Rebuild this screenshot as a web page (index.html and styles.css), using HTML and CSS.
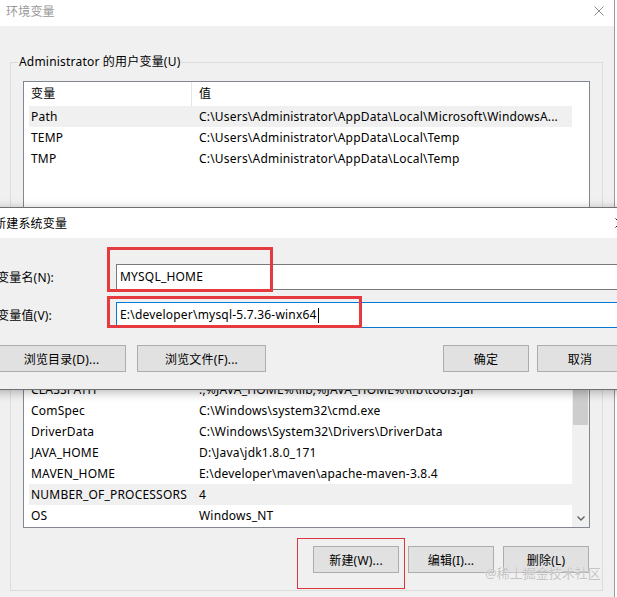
FILE: index.html
```html
<!DOCTYPE html>
<html lang="zh-CN">
<head>
    <meta charset="UTF-8">
    <meta name="viewport" content="width=device-width, initial-scale=1.0">
    <title>环境变量</title>
    <link rel="stylesheet" href="styles.css">
</head>
<body>
    <div class="window">
        <div class="titlebar">
            <span class="title">环境变量</span>
            <svg class="close" width="10" height="10" viewBox="0 0 10 10">
                <path d="M0.5 0.5 L9.5 9.5 M9.5 0.5 L0.5 9.5" stroke="#8c8c8c" stroke-width="1" fill="none"/>
            </svg>
        </div>
        <div class="content">
            <fieldset class="group group-user">
                <legend>Administrator 的用户变量(U)</legend>
                <div class="list list-user">
                    <div class="rows">
                        <div class="row head"><span class="cell name">变量</span><span class="cell value">值</span></div>
                        <div class="row hover"><span class="cell name">Path</span><span class="cell value">C:\Users\Administrator\AppData\Local\Microsoft\WindowsA...</span></div>
                        <div class="row"><span class="cell name">TEMP</span><span class="cell value">C:\Users\Administrator\AppData\Local\Temp</span></div>
                        <div class="row"><span class="cell name">TMP</span><span class="cell value">C:\Users\Administrator\AppData\Local\Temp</span></div>
                    </div>
                </div>
                <div class="actions">
                    <button>新建(N)...</button>
                    <button>编辑(E)...</button>
                    <button>删除(D)</button>
                </div>
            </fieldset>

            <fieldset class="group group-system">
                <legend>系统变量(S)</legend>
                <div class="list list-system">
                    <div class="rows">
                        <div class="row"><span class="cell name">CLASSPATH</span><span class="cell value">.;%JAVA_HOME%\lib;%JAVA_HOME%\lib\tools.jar</span></div>
                        <div class="row"><span class="cell name">ComSpec</span><span class="cell value">C:\Windows\system32\cmd.exe</span></div>
                        <div class="row"><span class="cell name">DriverData</span><span class="cell value">C:\Windows\System32\Drivers\DriverData</span></div>
                        <div class="row"><span class="cell name">JAVA_HOME</span><span class="cell value">D:\Java\jdk1.8.0_171</span></div>
                        <div class="row"><span class="cell name">MAVEN_HOME</span><span class="cell value">E:\developer\maven\apache-maven-3.8.4</span></div>
                        <div class="row hover"><span class="cell name">NUMBER_OF_PROCESSORS</span><span class="cell value">4</span></div>
                        <div class="row"><span class="cell name">OS</span><span class="cell value">Windows_NT</span></div>
                    </div>
                    <div class="scrollbar">
                        <div class="arrow"></div>
                        <div class="thumb"></div>
                        <div class="track"></div>
                        <div class="arrow">
                            <svg width="8" height="5" viewBox="0 0 8 5">
                                <path d="M0.5 0.5 L4 4 L7.5 0.5" stroke="#606060" stroke-width="1.3" fill="none"/>
                            </svg>
                        </div>
                    </div>
                </div>
                <div class="actions">
                    <button>新建(W)...</button>
                    <button>编辑(I)...</button>
                    <button>删除(L)</button>
                </div>
            </fieldset>
        </div>
    </div>

    <!-- 新建系统变量 对话框 -->
    <div class="dialog">
        <div class="dialog-title">
            <span>新建系统变量</span>
            <svg class="close" width="10" height="10" viewBox="0 0 10 10">
                <path d="M0.5 0.5 L9.5 9.5 M9.5 0.5 L0.5 9.5" stroke="#222" stroke-width="1" fill="none"/>
            </svg>
        </div>
        <div class="dialog-body">
            <div class="field">
                <label>变量名(N):</label>
                <div class="input">MYSQL_HOME</div>
            </div>
            <div class="field">
                <label>变量值(V):</label>
                <div class="input focused">E:\developer\mysql-5.7.36-winx64<span class="caret"></span></div>
            </div>
            <div class="dialog-actions">
                <button class="wide">浏览目录(D)...</button>
                <button class="wide">浏览文件(F)...</button>
                <span class="spacer"></span>
                <button>确定</button>
                <button>取消</button>
            </div>
        </div>
    </div>

    <div class="mark mark-name"></div>
    <div class="mark mark-value"></div>
    <div class="mark mark-new"></div>
    <div class="watermark">@稀土掘金技术社区</div>
</body>
</html>
```

FILE: styles.css
```css
body {
    margin: 0;
    width: 617px;
    height: 597px;
    overflow: hidden;
    position: relative;
    background: #fff;
    font-family: "Noto Sans", "Noto Sans CJK SC", sans-serif;
    font-size: 12px;
    letter-spacing: 0.2px;
    color: #000;
}

.window {
    width: 614px;
    height: 597px;
    border-right: 1px solid #9a9a9a;
    background: #f0f0f0;
}

.titlebar {
    height: 26px;
    background: #fff;
    display: flex;
    align-items: center;
    justify-content: space-between;
    padding: 0 10px 4px 6px;
    box-sizing: border-box;
}

.titlebar .title {
    color: #999;
    font-size: 12px;
}

.content {
    padding: 28px 11px 0 10px;
}

.group {
    margin: 0;
    padding: 11px 12px 17px 12px;
    border: 1px solid #dcdcdc;
    min-inline-size: 0;
}

.group legend {
    margin-left: -5px;
    padding: 0 1px;
    line-height: 16px;
}

.group-system {
    margin-top: 8px;
}

.list {
    background: #fff;
    border: 1px solid #828790;
    box-sizing: border-box;
    display: flex;
    overflow: hidden;
}

.list-user {
    height: 150px;
    padding-right: 17px;
}

.list-system {
    height: 199px;
}

.rows {
    flex: 1;
    display: flex;
    flex-direction: column;
    padding-left: 5px;
    min-width: 0;
}

.list-system .rows {
    justify-content: flex-end;
    padding-bottom: 1px;
}

.row {
    display: grid;
    grid-template-columns: 163px 1fr;
    height: 21px;
    line-height: 21px;
    white-space: nowrap;
    flex-shrink: 0;
}

.row.head {
    height: 24px;
    line-height: 24px;
}

.row.head .name {
    border-right: 1px solid #e5e5e5;
}

.row.hover {
    background: #f0f0f0;
}

.cell {
    overflow: hidden;
}

.cell.name {
    padding-left: 2px;
}

.cell.value {
    padding-left: 7px;
}

.scrollbar {
    width: 17px;
    background: #f0f0f0;
    display: flex;
    flex-direction: column;
}

.scrollbar .arrow {
    height: 17px;
    display: flex;
    align-items: center;
    justify-content: center;
}

.scrollbar .thumb {
    flex: 1;
    margin: 0 1px;
    background: #cdcdcd;
}

.scrollbar .track {
    height: 85px;
}

.actions {
    display: flex;
    justify-content: flex-end;
    gap: 9px;
    margin-top: 18px;
    padding-right: 1px;
}

button {
    font-family: inherit;
    font-size: 12px;
    letter-spacing: inherit;
    color: #000;
    background: #e1e1e1;
    border: 1px solid #adadad;
    height: 27px;
    width: 86px;
    padding: 0;
    margin: 0;
}

/* dialog */

.dialog {
    position: absolute;
    top: 207px;
    left: -14px;
    width: 649px;
    height: 183px;
    box-sizing: border-box;
    border: 1px solid #707070;
    background: #f0f0f0;
    box-shadow: 0 2px 10px rgba(0, 0, 0, 0.3);
}

.dialog-title {
    height: 30px;
    background: #fff;
    display: flex;
    align-items: center;
    justify-content: space-between;
    padding: 0 9px 0 7px;
    font-size: 12px;
}

.dialog-body {
    padding: 26px 11px 16px 10px;
}

.field {
    display: flex;
    align-items: center;
    height: 26px;
}

.field + .field {
    margin-top: 12px;
}

.field label {
    width: 119px;
    flex-shrink: 0;
}

.input {
    flex: 1;
    height: 26px;
    box-sizing: border-box;
    border: 1px solid #7a7a7a;
    background: #fff;
    line-height: 24px;
    padding-left: 3px;
    white-space: nowrap;
    display: flex;
    align-items: center;
}

.input.focused {
    border-color: #0078d7;
}

.caret {
    display: inline-block;
    width: 0;
    height: 15px;
    border-left: 1px solid #000;
    margin-left: 1px;
}

.dialog-actions {
    display: flex;
    margin-top: 17px;
    gap: 8px;
}

.dialog-actions button.wide {
    width: 129px;
}

.dialog-actions button.wide + button.wide {
    margin-left: 3px;
}

.spacer {
    flex: 1;
}

/* annotations */

.mark {
    position: absolute;
    box-sizing: border-box;
    border: 3px solid #e53a3f;
}

.mark-name {
    left: 107px;
    top: 247px;
    width: 166px;
    height: 45px;
}

.mark-value {
    left: 107px;
    top: 296px;
    width: 255px;
    height: 32px;
}

.mark-new {
    left: 297px;
    top: 538px;
    width: 108px;
    height: 51px;
    border-width: 1px;
    border-color: #d9363e;
}

.watermark {
    position: absolute;
    left: 485px;
    top: 564px;
    font-size: 13px;
    line-height: 18px;
    letter-spacing: 0;
    color: #c4c4c4;
    text-shadow: 0 0 1px rgba(255, 255, 255, 0.8);
}
```
